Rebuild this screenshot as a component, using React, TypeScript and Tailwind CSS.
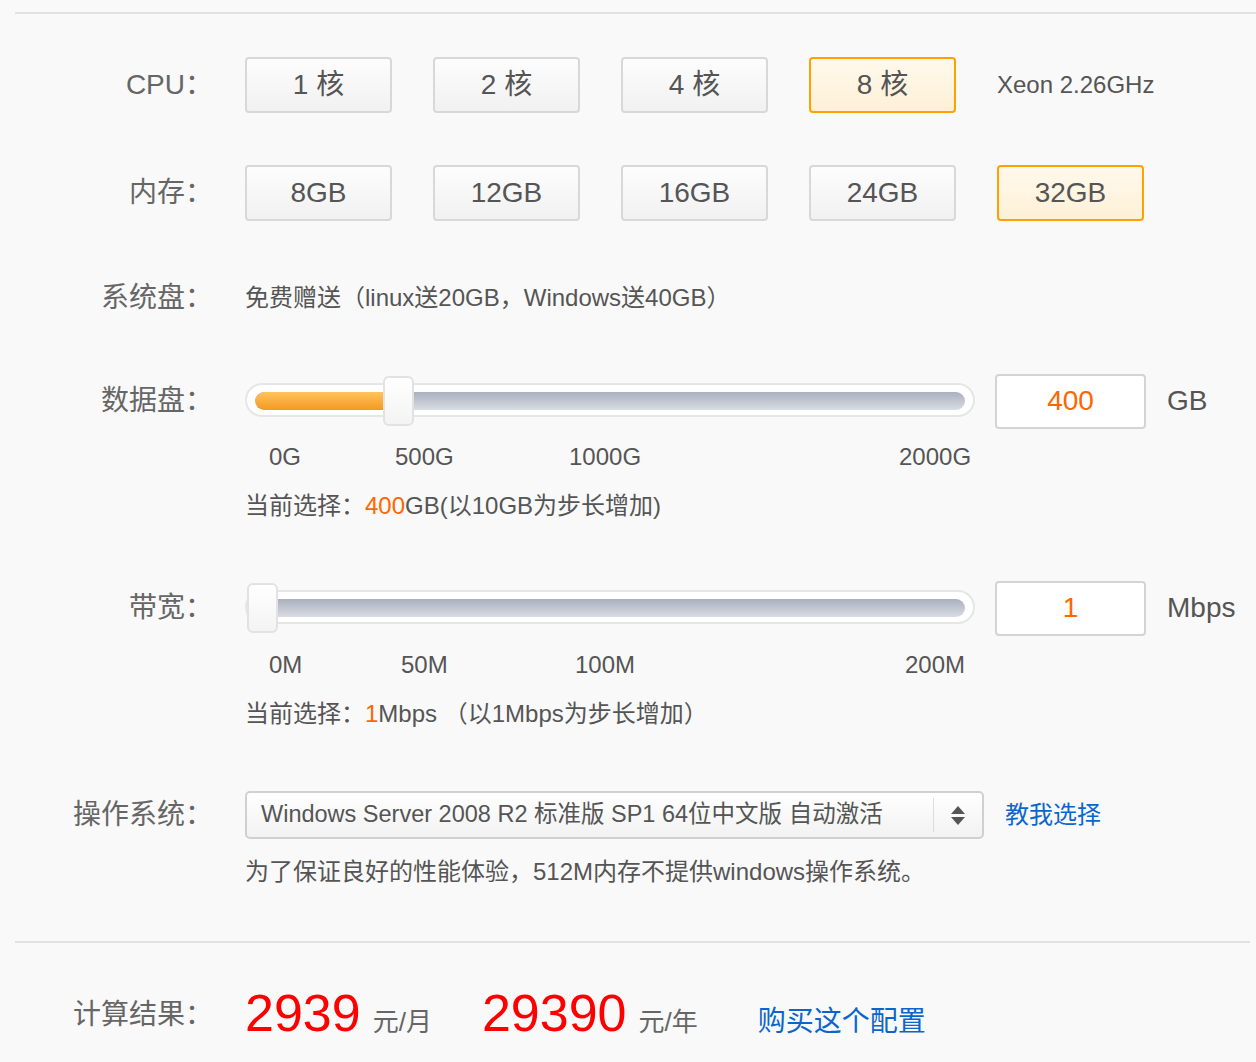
const FONT = { fontFamily: '"Liberation Sans", "Noto Sans CJK SC", sans-serif' };

const CPUS = ["1 核", "2 核", "4 核", "8 核"];
const MEMS = ["8GB", "12GB", "16GB", "24GB", "32GB"];

function Label({ children }: { children: React.ReactNode }) {
  return (
    <div className="w-[213px] shrink-0 text-right text-[28px] text-[#666] leading-none">
      {children}
    </div>
  );
}

function OptionButton({ text, active }: { text: string; active?: boolean }) {
  return (
    <div
      className={
        active
          ? "flex h-[56px] w-[147px] items-center justify-center rounded-[4px] border-2 border-[#ffa200] bg-gradient-to-b from-[#fff9ec] to-[#fdf0d6] text-[28px] text-[#555]"
          : "flex h-[56px] w-[147px] items-center justify-center rounded-[4px] border-2 border-[#d8d8d8] bg-gradient-to-b from-[#fdfdfd] to-[#f1f1f1] text-[28px] text-[#555]"
      }
    >
      {text}
    </div>
  );
}

function Slider({ handle, fill }: { handle: number; fill: number }) {
  return (
    <div className="relative h-[56px] w-[730px]">
      <div className="absolute left-0 right-0 top-[10px] h-[34px] rounded-full border-2 border-[#e6e6e6] bg-white">
        <div className="absolute left-[8px] right-[8px] top-[7px] h-[18px] overflow-hidden rounded-full bg-gradient-to-b from-[#aab1bd] to-[#d8dce3]">
          <div
            className="h-full rounded-full bg-gradient-to-b from-[#ffc35a] to-[#f39a1a]"
            style={{ width: fill }}
          />
        </div>
      </div>
      <div
        className="absolute top-[3px] h-[50px] w-[31px] rounded-[6px] border-2 border-[#e2e2e2] bg-gradient-to-b from-white to-[#f3f3f3]"
        style={{ left: handle }}
      />
    </div>
  );
}

function ValueBox({ value, unit }: { value: string; unit: string }) {
  return (
    <>
      <div className="ml-[20px] flex h-[55px] w-[151px] items-center justify-center rounded-[4px] border-2 border-[#d4d4d4] bg-white text-[28px] text-[#ff6600]">
        {value}
      </div>
      <div className="ml-[21px] text-[28px] text-[#555]">{unit}</div>
    </>
  );
}

function Ticks({ items, widths }: { items: string[]; widths: number[] }) {
  return (
    <div className="ml-[24px] flex text-[24px] text-[#555]">
      {items.map((t, i) => (
        <span key={t} style={{ width: widths[i] }}>
          {t}
        </span>
      ))}
    </div>
  );
}

export default function App() {
  return (
    <div className="min-h-[1062px] w-[1256px] bg-[#f9f9f9] pt-[12px]" style={FONT}>
      <div className="ml-[15px] h-[2px] bg-[#e2e2e2]" />

      <div className="mt-[43px] flex h-[56px] items-center">
        <Label>CPU：</Label>
        <div className="ml-[32px] flex items-center gap-[41px]">
          {CPUS.map((c, i) => (
            <OptionButton key={c} text={c} active={i === 3} />
          ))}
          <span className="text-[24px] text-[#555]">Xeon 2.26GHz</span>
        </div>
      </div>

      <div className="mt-[52px] flex h-[56px] items-center">
        <Label>内存：</Label>
        <div className="ml-[32px] flex items-center gap-[41px]">
          {MEMS.map((m, i) => (
            <OptionButton key={m} text={m} active={i === 4} />
          ))}
        </div>
      </div>

      <div className="mt-[57px] flex h-[40px] items-center">
        <Label>系统盘：</Label>
        <div className="ml-[32px] text-[24px] text-[#555]">
          免费赠送（linux送20GB，Windows送40GB）
        </div>
      </div>

      <div className="mt-[55px] flex h-[56px] items-center">
        <Label>数据盘：</Label>
        <div className="ml-[32px] flex items-center">
          <Slider handle={138} fill={140} />
          <ValueBox value="400" unit="GB" />
        </div>
      </div>

      <div className="mt-[13px] flex h-[30px] items-center">
        <div className="w-[245px] shrink-0" />
        <Ticks items={["0G", "500G", "1000G", "2000G"]} widths={[126, 174, 330, 80]} />
      </div>

      <div className="mt-[19px] flex h-[30px] items-center">
        <div className="w-[245px] shrink-0" />
        <div className="text-[24px] text-[#555]">
          当前选择：<span className="text-[#ff6600]">400</span>GB(以10GB为步长增加)
        </div>
      </div>

      <div className="mt-[59px] flex h-[56px] items-center">
        <Label>带宽：</Label>
        <div className="ml-[32px] flex items-center">
          <Slider handle={2} fill={0} />
          <ValueBox value="1" unit="Mbps" />
        </div>
      </div>

      <div className="mt-[14px] flex h-[30px] items-center">
        <div className="w-[245px] shrink-0" />
        <Ticks items={["0M", "50M", "100M", "200M"]} widths={[132, 174, 330, 80]} />
      </div>

      <div className="mt-[19px] flex h-[30px] items-center">
        <div className="w-[245px] shrink-0" />
        <div className="text-[24px] text-[#555]">
          当前选择：<span className="text-[#ff6600]">1</span>Mbps （以1Mbps为步长增加）
        </div>
      </div>

      <div className="mt-[62px] flex h-[48px] items-center">
        <Label>操作系统：</Label>
        <div className="ml-[32px] flex h-[48px] w-[739px] items-center rounded-[5px] border-2 border-[#d0d0d0] bg-gradient-to-b from-white to-[#f2f2f2]">
          <span className="flex-1 pl-[14px] text-[23.5px] text-[#555]">
            Windows Server 2008 R2 标准版 SP1 64位中文版 自动激活
          </span>
          <div className="h-[34px] w-px bg-[#dcdcdc]" />
          <div className="flex w-[48px] flex-col items-center gap-[3px]">
            <svg width="14" height="8" viewBox="0 0 14 8">
              <path d="M7 0 L14 8 L0 8 Z" fill="#555" />
            </svg>
            <svg width="14" height="8" viewBox="0 0 14 8">
              <path d="M0 0 L14 0 L7 8 Z" fill="#555" />
            </svg>
          </div>
        </div>
        <a className="ml-[21px] text-[24px] text-[#0b66cc]">教我选择</a>
      </div>

      <div className="mt-[18px] flex h-[30px] items-center">
        <div className="w-[245px] shrink-0" />
        <div className="text-[24px] text-[#555]">
          为了保证良好的性能体验，512M内存不提供windows操作系统。
        </div>
      </div>

      <div className="ml-[15px] mr-[6px] mt-[54px] h-[2px] bg-[#e2e2e2]" />

      <div className="mt-[42px] flex h-[60px] items-center">
        <Label>计算结果：</Label>
        <div className="ml-[32px] flex items-baseline">
          <span className="text-[52px] leading-none text-[#ff0000]">2939</span>
          <span className="ml-[12px] text-[26px] text-[#666]">元/月</span>
          <span className="ml-[50px] text-[52px] leading-none text-[#ff0000]">29390</span>
          <span className="ml-[12px] text-[26px] text-[#666]">元/年</span>
          <a className="ml-[60px] text-[28px] text-[#0b66cc]">购买这个配置</a>
        </div>
      </div>
    </div>
  );
}
